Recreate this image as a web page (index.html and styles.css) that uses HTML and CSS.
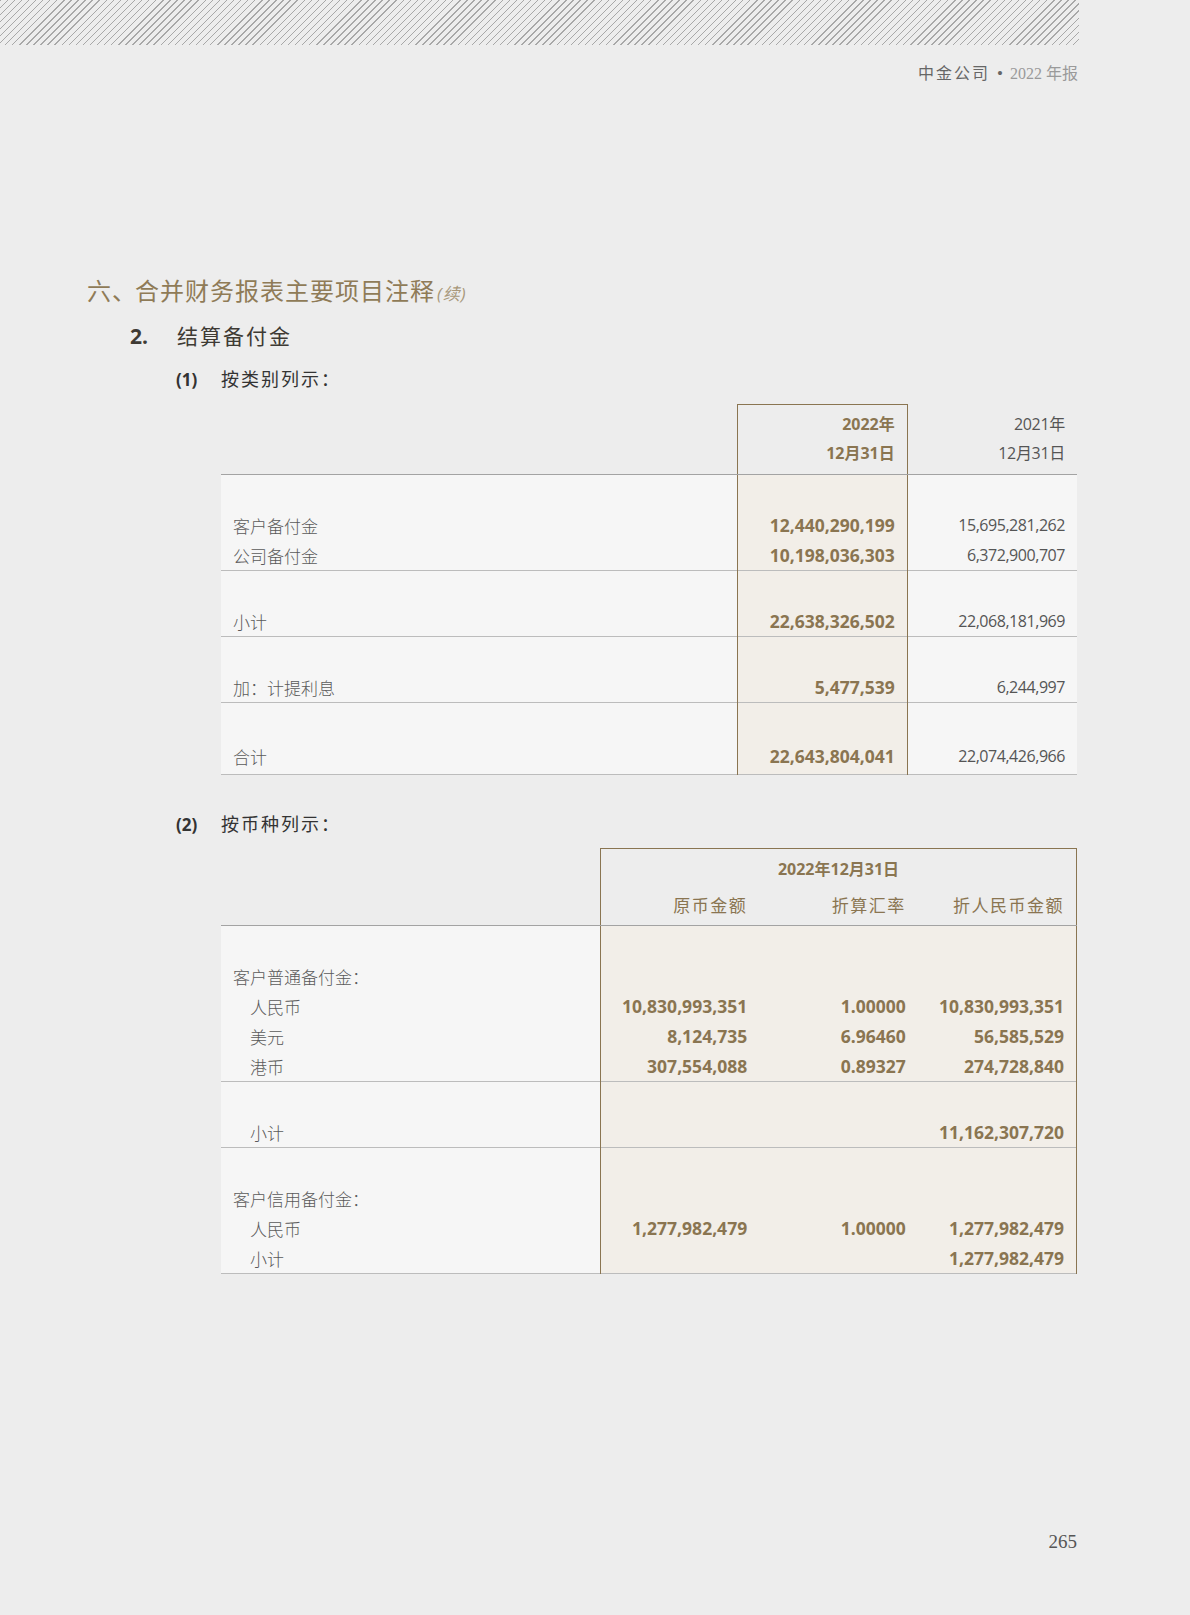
FILE: index.html
```html
<!DOCTYPE html>
<html>
<head>
  <meta charset="utf-8">
  <title>中金公司 2022年报 - 结算备付金</title>
  <link rel="stylesheet" href="styles.css">
</head>
<body>
  <div class="hatch"></div>
  <div class="running-head">
    <span class="co">中金公司</span>
    <span class="dot">•</span>
    <span class="yr">2022 年报</span>
  </div>

  <div class="page">
    <h1 class="title">六<span class="punct">、</span>合并财务报表主要项目注释<span class="cont">(续)</span></h1>
    <h2 class="sec"><span class="num">2.</span>结算备付金</h2>

    <h3 class="sub"><span class="num">(1)</span>按类别列示：</h3>
    <table class="fin t1">
      <thead>
        <tr>
          <th class="lbl"></th>
          <th class="hl">2022年<br>12月31日</th>
          <th class="prev">2021年<br>12月31日</th>
        </tr>
      </thead>
      <tbody>
        <tr class="gap"><td></td><td class="hl"></td><td></td></tr>
        <tr><td class="lbl">客户备付金</td><td class="hl">12,440,290,199</td><td class="prev">15,695,281,262</td></tr>
        <tr><td class="lbl">公司备付金</td><td class="hl">10,198,036,303</td><td class="prev">6,372,900,707</td></tr>
      </tbody>
      <tbody>
        <tr class="gap"><td></td><td class="hl"></td><td></td></tr>
        <tr><td class="lbl">小计</td><td class="hl">22,638,326,502</td><td class="prev">22,068,181,969</td></tr>
      </tbody>
      <tbody>
        <tr class="gap"><td></td><td class="hl"></td><td></td></tr>
        <tr><td class="lbl">加：计提利息</td><td class="hl">5,477,539</td><td class="prev">6,244,997</td></tr>
      </tbody>
      <tbody>
        <tr class="gap"><td></td><td class="hl"></td><td></td></tr>
        <tr class="last"><td class="lbl">合计</td><td class="hl">22,643,804,041</td><td class="prev">22,074,426,966</td></tr>
      </tbody>
    </table>

    <h3 class="sub sub2"><span class="num">(2)</span>按币种列示：</h3>
    <table class="fin t2">
      <thead>
        <tr class="top">
          <th class="lbl" rowspan="2"></th>
          <th class="hl span" colspan="3">2022年12月31日</th>
        </tr>
        <tr class="cols">
          <th class="hl a">原币金额</th>
          <th class="hl b">折算汇率</th>
          <th class="hl c">折人民币金额</th>
        </tr>
      </thead>
      <tbody>
        <tr class="gap"><td></td><td class="hl a"></td><td class="hl b"></td><td class="hl c"></td></tr>
        <tr><td class="lbl">客户普通备付金：</td><td class="hl a"></td><td class="hl b"></td><td class="hl c"></td></tr>
        <tr><td class="lbl in">人民币</td><td class="hl a">10,830,993,351</td><td class="hl b">1.00000</td><td class="hl c">10,830,993,351</td></tr>
        <tr><td class="lbl in">美元</td><td class="hl a">8,124,735</td><td class="hl b">6.96460</td><td class="hl c">56,585,529</td></tr>
        <tr><td class="lbl in">港币</td><td class="hl a">307,554,088</td><td class="hl b">0.89327</td><td class="hl c">274,728,840</td></tr>
      </tbody>
      <tbody>
        <tr class="gap"><td></td><td class="hl a"></td><td class="hl b"></td><td class="hl c"></td></tr>
        <tr><td class="lbl in">小计</td><td class="hl a"></td><td class="hl b"></td><td class="hl c">11,162,307,720</td></tr>
      </tbody>
      <tbody>
        <tr class="gap"><td></td><td class="hl a"></td><td class="hl b"></td><td class="hl c"></td></tr>
        <tr><td class="lbl">客户信用备付金：</td><td class="hl a"></td><td class="hl b"></td><td class="hl c"></td></tr>
        <tr><td class="lbl in">人民币</td><td class="hl a">1,277,982,479</td><td class="hl b">1.00000</td><td class="hl c">1,277,982,479</td></tr>
        <tr><td class="lbl in">小计</td><td class="hl a"></td><td class="hl b"></td><td class="hl c">1,277,982,479</td></tr>
      </tbody>
    </table>

    <div class="page-no">265</div>
  </div>
</body>
</html>
```

FILE: styles.css
```css
body {
  margin: 0;
  background-color: #ededed;
  font-family: "Open Sans", "Noto Sans CJK SC", sans-serif;
  color: #555;
}

.hatch {
  width: 1079px;
  height: 45px;
  background-image: repeating-linear-gradient(135deg, #a8a8a8 0, #a8a8a8 1px, transparent 1px, transparent 5px);
}

.running-head {
  width: 1078px;
  margin-top: 19px;
  text-align: right;
  font-family: "Liberation Serif", "Noto Sans CJK SC", serif;
  font-size: 16px;
  line-height: 20px;
}

.running-head .co {
  color: #666;
  letter-spacing: 2px;
}

.running-head .dot {
  color: #666;
  font-size: 17px;
  margin: 0 3px;
}

.running-head .yr {
  color: #9a9a9a;
}

.page {
  padding-left: 87px;
  width: 990px;
}

.title {
  margin: 190px 0 0 0;
  font-size: 24px;
  font-weight: normal;
  line-height: 34px;
  letter-spacing: 1px;
  color: #8f7b57;
}

.title .punct {
  font-feature-settings: "halt";
  margin-right: 10px;
}

.title .cont {
  font-size: 17px;
  font-style: italic;
  color: #a8987a;
  letter-spacing: 1px;
  margin-left: 2px;
}

.sec {
  margin: 10px 0 0 43px;
  font-size: 21px;
  font-weight: normal;
  line-height: 30px;
  letter-spacing: 2px;
  color: #3e3a34;
}

.sec .num {
  display: inline-block;
  width: 47px;
  font-weight: bold;
  letter-spacing: 0;
}

.sub {
  margin: 14px 0 0 89px;
  font-size: 18px;
  font-weight: normal;
  line-height: 28px;
  letter-spacing: 2px;
  color: #333;
}

.sub .num {
  display: inline-block;
  width: 45px;
  font-weight: bold;
  font-size: 17px;
  letter-spacing: 0;
}

.sub2 {
  margin-top: 35px;
}

/* tables */
.fin {
  margin-left: 134px;
  width: 856px;
  border-collapse: collapse;
  table-layout: fixed;
}

.t1 {
  margin-top: 10px;
}

.t2 {
  margin-top: 9px;
}

.fin th,
.fin td {
  padding: 0 12px;
  text-align: right;
  white-space: nowrap;
}

.fin td {
  height: 30px;
  background-color: #f6f6f6;
  font-size: 16px;
  letter-spacing: -0.45px;
}

.fin td.lbl {
  text-align: left;
  font-size: 17px;
  font-weight: 300;
  letter-spacing: 0;
  color: #5a5a5a;
}

.fin td.in {
  padding-left: 29px;
}

.fin td.hl {
  background-color: #f2eee8;
  color: #8a7551;
  font-weight: 700;
  font-size: 17.5px;
  letter-spacing: 0;
}

.fin tr.gap td {
  height: 35px;
}

.fin tbody {
  border-bottom: 1px solid #bcbcbc;
}

.fin thead tr:last-child th {
  border-bottom: 1px solid #a3a3a3;
}

.fin th {
  font-weight: normal;
  font-size: 16px;
  color: #555;
}

.fin th.hl {
  font-weight: 700;
  color: #8a7551;
}

/* table 1 */
.t1 .lbl {
  width: 492px;
}

.t1 th {
  height: 58px;
  padding-top: 5px;
  padding-bottom: 6px;
  line-height: 29px;
}

.t1 .hl {
  border-left: 1px solid #8a7551;
  border-right: 1px solid #8a7551;
}

.t1 th.hl {
  border-top: 1px solid #8a7551;
}

.t1 th.prev {
  letter-spacing: -0.3px;
}

.t1 tr.last td {
  height: 36px;
}

/* table 2 */
.t2 .lbl {
  width: 355px;
}

.t2 .a {
  border-left: 1px solid #8a7551;
}

.t2 .c {
  border-right: 1px solid #8a7551;
}

.t2 tr.top th {
  height: 38px;
  padding-top: 0;
  padding-bottom: 0;
  border-top: 1px solid #8a7551;
}

.t2 tr.top th.lbl {
  border-top: none;
  border-bottom: 1px solid #a3a3a3;
}

.t2 th.span {
  text-align: center;
  border-left: 1px solid #8a7551;
  border-right: 1px solid #8a7551;
}

.t2 tr.cols th {
  height: 35px;
  padding-top: 0;
  padding-bottom: 3px;
  vertical-align: middle;
  font-weight: 400;
  font-size: 17px;
  letter-spacing: 1.5px;
}

.t2 tr.gap td {
  height: 35px;
}

.page-no {
  margin-top: 256px;
  text-align: right;
  font-family: "Liberation Serif", serif;
  font-size: 19px;
  line-height: 24px;
  color: #555;
}
```
